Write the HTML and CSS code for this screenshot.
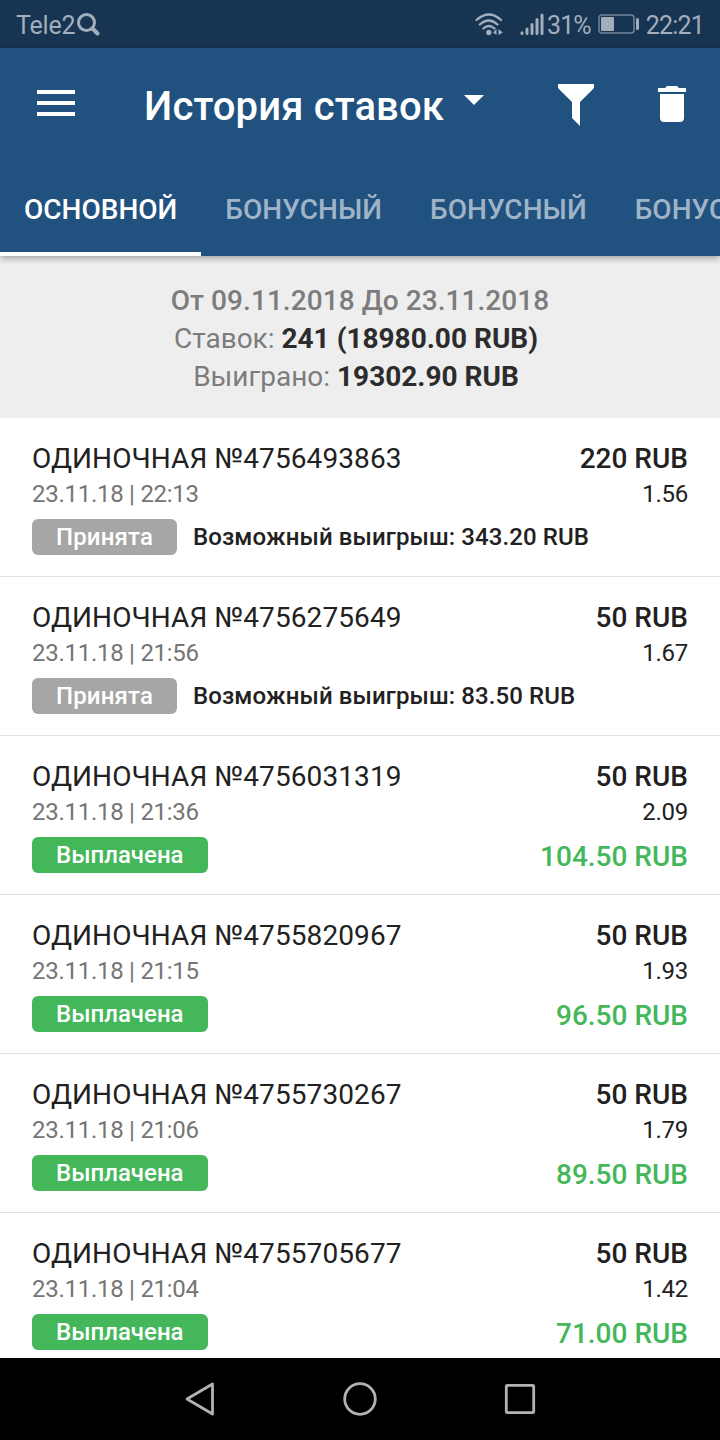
FILE: index.html
```html
<!DOCTYPE html>
<html lang="ru">
<head>
    <meta charset="UTF-8">
    <meta name="viewport" content="width=device-width, initial-scale=1.0">
    <title>История ставок</title>
    <link rel="stylesheet" href="styles.css">
</head>
<body>
    <div class="status-bar">
        <span class="carrier">Tele2</span>
        <svg class="search-icon" width="24" height="24" viewBox="0 0 24 24" fill="none" stroke="currentColor">
            <circle cx="9.5" cy="10.5" r="8" stroke-width="3"/>
            <path d="M15.5 16.5l5 5" stroke-width="4" stroke-linecap="round"/>
        </svg>
        <svg class="wifi-icon" width="28" height="24" viewBox="0 0 28 24" fill="none" stroke="currentColor" stroke-width="2.3" stroke-linecap="round">
            <path d="M1.5 8Q14 -3 26 8"/>
            <path d="M4.8 12.5Q14 4.5 22.5 12.5"/>
            <path d="M8.3 16.5Q14 11.5 19.5 16.5"/>
            <circle cx="13.8" cy="20.5" r="2.7" fill="currentColor" stroke="none"/>
            <path d="M18 20.5l3.5-3.5v6zM27.8 20.5L23.5 17v6z" fill="currentColor" stroke="none"/>
        </svg>
        <svg class="signal-icon" width="24" height="24" viewBox="0 0 24 24" stroke="currentColor" stroke-width="3" stroke-linecap="round">
            <path d="M2 20.8v0.7M7 17v4.5M12 12.5v9M17 7.5v14M22 3v18.5"/>
        </svg>
        <span class="percent">31%</span>
        <svg class="battery-icon" width="42" height="20" viewBox="0 0 42 20">
            <rect x="1" y="1" width="35" height="18" rx="3" fill="none" stroke="currentColor" stroke-width="1.5" opacity="0.65"/>
            <rect x="3" y="3" width="13" height="14" rx="1" fill="currentColor"/>
            <rect x="38" y="4" width="3" height="12" rx="1.5" fill="currentColor"/>
        </svg>
        <span class="clock">22:21</span>
    </div>

    <header class="header">
        <div class="toolbar">
            <button class="menu-btn" aria-label="Меню">
                <svg width="38" height="28" viewBox="0 0 38 28" fill="#fff">
                    <path d="M0 0h38v4H0zM0 11h38v4H0zM0 22h38v4H0z"/>
                </svg>
            </button>
            <h1>История ставок</h1>
            <svg class="caret" width="20" height="10" viewBox="0 0 20 10" fill="#fff">
                <path d="M0 0h20L10 10z"/>
            </svg>
            <button class="filter-btn" aria-label="Фильтр">
                <svg width="36" height="42" viewBox="0 0 36 42" fill="#fff">
                    <path d="M0 0h36v4L22 18v24l-8-8V18L0 4z"/>
                </svg>
            </button>
            <button class="delete-btn" aria-label="Удалить">
                <svg width="28" height="36" viewBox="0 0 28 36" fill="#fff">
                    <path d="M7 2l2-2h10l2 2h7v4H0V2zM2 8h24v24q0 4-4 4H6q-4 0-4-4z"/>
                </svg>
            </button>
        </div>
        <nav class="tabs">
            <a class="tab active">ОСНОВНОЙ</a>
            <a class="tab">БОНУСНЫЙ</a>
            <a class="tab">БОНУСНЫЙ</a>
            <a class="tab">БОНУСНЫЙ</a>
        </nav>
    </header>

    <section class="summary">
        <p class="period">От 09.11.2018 До 23.11.2018</p>
        <p class="total">Ставок: <b>241 (18980.00 RUB)</b></p>
        <p class="total">Выиграно: <b>19302.90 RUB</b></p>
    </section>

    <main class="bets">
        <div class="bet">
            <div class="bet-title"><span class="number">ОДИНОЧНАЯ №4756493863</span><b>220 RUB</b></div>
            <div class="bet-info"><span class="date">23.11.18 | 22:13</span><span>1.56</span></div>
            <div class="bet-result">
                <span class="badge accepted">Принята</span>
                <span class="possible">Возможный выигрыш: 343.20 RUB</span>
            </div>
        </div>
        <div class="bet">
            <div class="bet-title"><span class="number">ОДИНОЧНАЯ №4756275649</span><b>50 RUB</b></div>
            <div class="bet-info"><span class="date">23.11.18 | 21:56</span><span>1.67</span></div>
            <div class="bet-result">
                <span class="badge accepted">Принята</span>
                <span class="possible">Возможный выигрыш: 83.50 RUB</span>
            </div>
        </div>
        <div class="bet">
            <div class="bet-title"><span class="number">ОДИНОЧНАЯ №4756031319</span><b>50 RUB</b></div>
            <div class="bet-info"><span class="date">23.11.18 | 21:36</span><span>2.09</span></div>
            <div class="bet-result">
                <span class="badge paid">Выплачена</span>
                <span class="win">104.50 RUB</span>
            </div>
        </div>
        <div class="bet">
            <div class="bet-title"><span class="number">ОДИНОЧНАЯ №4755820967</span><b>50 RUB</b></div>
            <div class="bet-info"><span class="date">23.11.18 | 21:15</span><span>1.93</span></div>
            <div class="bet-result">
                <span class="badge paid">Выплачена</span>
                <span class="win">96.50 RUB</span>
            </div>
        </div>
        <div class="bet">
            <div class="bet-title"><span class="number">ОДИНОЧНАЯ №4755730267</span><b>50 RUB</b></div>
            <div class="bet-info"><span class="date">23.11.18 | 21:06</span><span>1.79</span></div>
            <div class="bet-result">
                <span class="badge paid">Выплачена</span>
                <span class="win">89.50 RUB</span>
            </div>
        </div>
        <div class="bet">
            <div class="bet-title"><span class="number">ОДИНОЧНАЯ №4755705677</span><b>50 RUB</b></div>
            <div class="bet-info"><span class="date">23.11.18 | 21:04</span><span>1.42</span></div>
            <div class="bet-result">
                <span class="badge paid">Выплачена</span>
                <span class="win">71.00 RUB</span>
            </div>
        </div>
    </main>

    <footer class="nav-bar">
        <svg width="34" height="34" viewBox="0 0 34 34">
            <path d="M4 17L29.5 2v30z"/>
        </svg>
        <svg width="34" height="34" viewBox="0 0 34 34">
            <circle cx="17" cy="17" r="15.3"/>
        </svg>
        <svg width="34" height="34" viewBox="0 0 34 34">
            <rect x="3.3" y="3.3" width="27.4" height="27.4" rx="1"/>
        </svg>
    </footer>
</body>
</html>
```
FILE: styles.css
```css
* {
    margin: 0;
    padding: 0;
    box-sizing: border-box;
}

:root {
    --primary: #21517f;
    --primary-dark: #173552;
    --green: #44b75a;
    --grey: #a6a6a6;
    --text: #212121;
    --text-muted: #757575;
}

body {
    display: flex;
    flex-direction: column;
    height: 100vh;
    overflow: hidden;
    background-color: #fff;
    color: var(--text);
    font-family: Roboto, sans-serif;
}

button {
    display: flex;
    background: none;
    border: none;
    cursor: pointer;
}

svg {
    display: block;
    flex-shrink: 0;
}

/* Status bar */
.status-bar {
    display: flex;
    align-items: center;
    flex-shrink: 0;
    height: 48px;
    padding: 0 16px;
    background-color: var(--primary-dark);
    color: #a2aebc;
    font-size: 25px;
    line-height: 46px;
}

.status-bar span {
    padding-top: 3px;
}

.carrier {
    letter-spacing: -0.2px;
}

.search-icon {
    margin-left: 2px;
}

.wifi-icon {
    margin-left: auto;
}

.signal-icon {
    margin-left: 17px;
}

.percent {
    margin-left: 3px;
    letter-spacing: -0.9px;
}

.battery-icon {
    margin: 0 6px 0 7px;
}

.clock {
    letter-spacing: -0.8px;
}

/* Header */
.header {
    position: relative;
    flex-shrink: 0;
    background-color: var(--primary);
    box-shadow: 0 2px 7px rgba(0, 0, 0, 0.35);
    color: #fff;
}

.toolbar {
    display: flex;
    align-items: center;
    height: 112px;
    padding: 0 34px 0 37px;
}

.toolbar h1 {
    margin-left: 69px;
    padding-top: 5px;
    font-size: 40px;
    font-weight: 500;
    letter-spacing: 0.15px;
    line-height: 48px;
}

.caret {
    margin: 0 0 8px 20px;
}

.filter-btn {
    margin-left: auto;
    padding-top: 2px;
}

.delete-btn {
    margin-left: 64px;
}

.tabs {
    display: flex;
    height: 96px;
    overflow: hidden;
}

.tab {
    flex-shrink: 0;
    padding: 0 24px;
    color: #a0b4c8;
    font-size: 28px;
    font-weight: 500;
    letter-spacing: 0.05px;
    line-height: 100px;
}

.tab.active {
    border-bottom: 4px solid #fff;
    color: #fff;
    letter-spacing: 0;
}

/* Period summary */
.summary {
    flex-shrink: 0;
    height: 162px;
    padding-top: 26px;
    background-color: #eee;
    color: #7c7c7c;
    font-size: 28px;
    line-height: 38px;
    text-align: center;
}

.period {
    font-weight: 500;
    letter-spacing: 0.07px;
}

.total {
    padding-right: 8px;
}

.summary b {
    color: #2c2c2c;
    font-weight: 700;
}

/* Bet list */
.bets {
    flex: 1;
    min-height: 0;
    overflow: hidden;
}

.bet {
    height: 159px;
    padding: 23px 32px 0;
    border-bottom: 1px solid #e2e2e2;
    line-height: 36px;
}

.bet-title,
.bet-info {
    display: flex;
    justify-content: space-between;
}

.bet-title {
    height: 35px;
    font-size: 28px;
}

.number {
    letter-spacing: 0.09px;
}

.bet-title b {
    font-weight: 500;
}

.bet-info {
    font-size: 24px;
    letter-spacing: -0.27px;
}

.date {
    color: var(--text-muted);
}

.bet-result {
    display: flex;
    margin-top: 7px;
    font-size: 24px;
    font-weight: 500;
}

.badge {
    height: 36px;
    padding: 0 24px;
    border-radius: 6px;
    color: #fff;
}

.accepted {
    background-color: var(--grey);
    letter-spacing: 0.15px;
}

.paid {
    background-color: var(--green);
}

.possible {
    margin-left: 16px;
    letter-spacing: 0.11px;
}

.win {
    margin-left: auto;
    padding-top: 2px;
    color: var(--green);
    font-size: 28px;
}

/* System navigation */
.nav-bar {
    display: flex;
    justify-content: center;
    align-items: center;
    gap: 126px;
    flex-shrink: 0;
    height: 82px;
    background-color: #000;
}

.nav-bar svg {
    fill: none;
    stroke: #b2b2b2;
    stroke-width: 2.8;
    stroke-linejoin: round;
}
```
